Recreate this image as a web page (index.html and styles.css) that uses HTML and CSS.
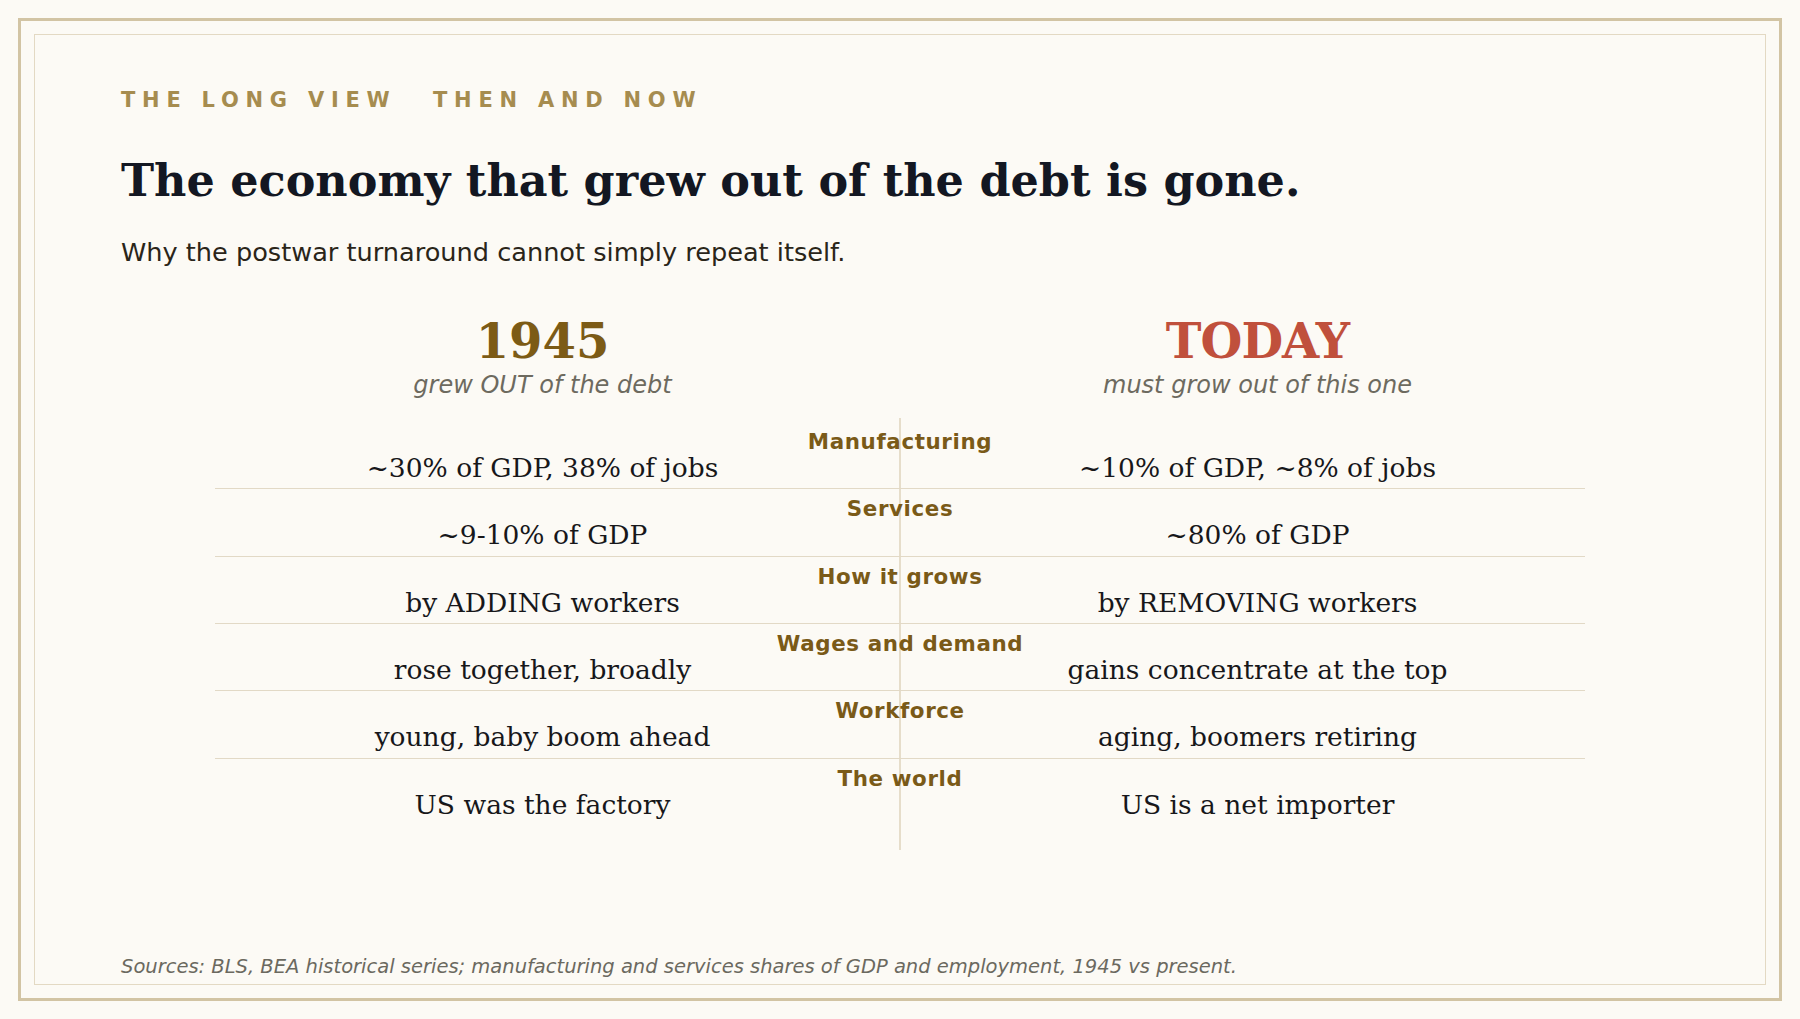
FILE: index.html
```html
<!DOCTYPE html>
<html lang="en">
<head>
<meta charset="utf-8">
<title>The Long View — Then and Now</title>
<link rel="stylesheet" href="styles.css">
</head>
<body>
<div class="page">
  <div class="frame">
    <div class="inner">
      <div class="eyebrow"><span>THE LONG VIEW</span><span>THEN AND NOW</span></div>
      <h1 class="title">The economy that grew out of the debt is gone.</h1>
      <p class="subtitle">Why the postwar turnaround cannot simply repeat itself.</p>

      <div class="compare">
        <div class="heads">
          <div class="head">
            <div class="era era-then">1945</div>
            <div class="tag">grew OUT of the debt</div>
          </div>
          <div class="head">
            <div class="era era-now">TODAY</div>
            <div class="tag">must grow out of this one</div>
          </div>
        </div>

        <div class="table">
          <div class="row">
            <div class="label">Manufacturing</div>
            <div class="vals"><div class="val">~30% of GDP, 38% of jobs</div><div class="val">~10% of GDP, ~8% of jobs</div></div>
          </div>
          <div class="row">
            <div class="label">Services</div>
            <div class="vals"><div class="val">~9-10% of GDP</div><div class="val">~80% of GDP</div></div>
          </div>
          <div class="row">
            <div class="label">How it grows</div>
            <div class="vals"><div class="val">by ADDING workers</div><div class="val">by REMOVING workers</div></div>
          </div>
          <div class="row">
            <div class="label">Wages and demand</div>
            <div class="vals"><div class="val">rose together, broadly</div><div class="val">gains concentrate at the top</div></div>
          </div>
          <div class="row">
            <div class="label">Workforce</div>
            <div class="vals"><div class="val">young, baby boom ahead</div><div class="val">aging, boomers retiring</div></div>
          </div>
          <div class="row">
            <div class="label">The world</div>
            <div class="vals"><div class="val">US was the factory</div><div class="val">US is a net importer</div></div>
          </div>
        </div>
      </div>

      <p class="source">Sources: BLS, BEA historical series; manufacturing and services shares of GDP and employment, 1945 vs present.</p>
    </div>
  </div>
</div>
</body>
</html>
```

FILE: styles.css
```css
html, body {
  margin: 0;
  padding: 0;
}

body {
  background: #fcfaf5;
  font-family: "DejaVu Sans", sans-serif;
}

.page {
  box-sizing: border-box;
  height: 1019px;
  padding: 18px;
}

.frame {
  box-sizing: border-box;
  height: 100%;
  border: 3px solid #d2c4a4;
  padding: 13px;
}

.inner {
  box-sizing: border-box;
  height: 100%;
  border: 1px solid #e3d9c3;
  padding: 53px 86px 6.2px;
  display: flex;
  flex-direction: column;
}

.eyebrow {
  display: flex;
  gap: 36.5px;
  font-family: "DejaVu Sans", sans-serif;
  font-weight: 700;
  font-size: 21px;
  letter-spacing: 6.75px;
  color: #a68c4f;
}

.title {
  margin: 42.3px 0 0;
  font-family: "DejaVu Serif", serif;
  font-weight: 700;
  font-size: 44.5px;
  color: #131722;
}

.subtitle {
  margin: 30.3px 0 0;
  font-family: "DejaVu Sans", sans-serif;
  font-size: 25.6px;
  color: #2a2519;
}

.compare {
  width: 1370px;
  margin: 46.2px auto 0;
}

.heads,
.vals {
  display: grid;
  grid-template-columns: 1fr 1fr;
  column-gap: 60px;
  text-align: center;
}

.era {
  font-family: "DejaVu Serif", serif;
  font-weight: 700;
  font-size: 48px;
}

.era-then {
  color: #7c5b16;
}

.era-now {
  color: #c0503c;
  letter-spacing: -1px;
}

.tag {
  margin-top: 2.6px;
  font-family: "DejaVu Sans", sans-serif;
  font-style: italic;
  font-size: 24px;
  color: #6d6a5f;
}

.table {
  margin-top: 18.4px;
  padding: 4px 0 25.2px;
  background: linear-gradient(#e6ddca, #e6ddca) center / 2px 100% no-repeat;
}

.row {
  padding: 8px 0 6.2px;
  border-bottom: 1px solid #e2d9c6;
}

.row:last-child {
  border-bottom: none;
}

.label {
  text-align: center;
  font-family: "DejaVu Sans", sans-serif;
  font-weight: 700;
  font-size: 21.4px;
  line-height: 24px;
  letter-spacing: 0.6px;
  color: #7a5a18;
}

.vals {
  margin-top: 0.2px;
}

.val {
  font-family: "DejaVu Serif", serif;
  font-size: 26.5px;
  line-height: 28px;
  color: #17171a;
}

.source {
  margin: auto 0 0;
  font-family: "DejaVu Sans", sans-serif;
  font-style: italic;
  font-size: 19.5px;
  color: #6b695f;
}
```
